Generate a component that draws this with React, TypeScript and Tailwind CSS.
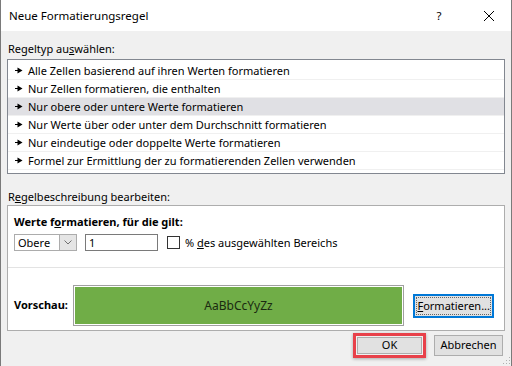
import React from 'react';

const ruleTypes = [
  'Alle Zellen basierend auf ihren Werten formatieren',
  'Nur Zellen formatieren, die enthalten',
  'Nur obere oder untere Werte formatieren',
  'Nur Werte über oder unter dem Durchschnitt formatieren',
  'Nur eindeutige oder doppelte Werte formatieren',
  'Formel zur Ermittlung der zu formatierenden Zellen verwenden',
];

function Arrow() {
  return (
    <svg width="8" height="7" viewBox="0 0 8 7" className="shrink-0">
      <path d="M0 3.5H3" stroke="#000" strokeWidth="1" />
      <path d="M2.5 0.5L7.5 3.5L2.5 6.5Z" fill="#000" />
    </svg>
  );
}

export default function App() {
  const selected = 2;

  return (
    <div
      className="w-[512px] h-[366px] flex flex-col bg-[#f0f0f0] border-x border-[#7a7a7a] text-[11px] text-black overflow-hidden"
      style={{ fontFamily: '"Segoe UI", "Noto Sans", sans-serif' }}
    >
      {/* Title bar */}
      <div className="h-[31px] shrink-0 bg-white flex items-center pl-[8px] text-[11.5px]">
        <span className="flex-1">Neue Formatierungsregel</span>
        <span className="w-[12px] text-center mr-[38px]">?</span>
        <svg width="12" height="12" viewBox="0 0 12 12" className="mr-[16px]">
          <path d="M1 1L11 11M11 1L1 11" stroke="#000" strokeWidth="1" />
        </svg>
      </div>

      <div className="flex flex-col px-[6px]">
        <div className="h-[16px] leading-[16px] mt-[10px] pl-[1px]">
          Regeltyp au<span className="underline">s</span>wählen:
        </div>

        {/* Rule type list */}
        <div className="mt-[2px] h-[115px] bg-white border border-[#828790] pt-[2px] flex flex-col">
          {ruleTypes.map((t, i) => (
            <div
              key={t}
              className={`h-[18px] flex items-center gap-[5px] pl-[7px] border-b border-[#f0f0f0] ${
                i === selected ? 'bg-[#e0e0e4]' : ''
              }`}
            >
              <Arrow />
              <span className="leading-[16px]">{t}</span>
            </div>
          ))}
        </div>

        <div className="h-[16px] leading-[16px] mt-[15px] pl-[1px]">
          R<span className="underline">e</span>gelbeschreibung bearbeiten:
        </div>

        {/* Rule description */}
        <div className="h-[126px] bg-white border border-[#adadad] flex flex-col">
          <div className="h-[62px] border-b border-[#e3e3e3] pl-[6px] pt-[8px] flex flex-col">
            <div className="h-[16px] leading-[16px] font-bold">
              Werte f<span className="underline">o</span>rmatieren, für die gilt:
            </div>
            <div className="mt-[4px] flex items-center h-[17px]">
              <div className="w-[63px] h-[17px] border border-[#acacac] flex">
                <span className="flex-1 pl-[3px] leading-[15px]">Obere</span>
                <div className="w-[17px] h-full bg-[#e5e5e5] border-l border-[#acacac] flex items-center justify-center">
                  <svg width="8" height="5" viewBox="0 0 8 5">
                    <path d="M0.5 0.5L4 4L7.5 0.5" stroke="#707070" fill="none" strokeWidth="1" />
                  </svg>
                </div>
              </div>
              <div className="ml-[8px] w-[73px] h-[17px] border border-[#7a7a7a] pl-[3px] leading-[15px]">1</div>
              <div className="ml-[9px] w-[13px] h-[13px] border border-[#333] bg-white" />
              <span className="ml-[5px] leading-[16px]">
                % <span className="underline">d</span>es ausgewählten Bereichs
              </span>
            </div>
          </div>
          <div className="flex-1 flex items-end pl-[6px] pr-[10px] pb-[4px]">
            <div className="h-[41px] w-full flex items-center">
              <span className="w-[59px] font-bold">Vorschau:</span>
              <div className="w-[334px] h-[41px] border border-[#a0a0a0] p-px">
                <div className="w-full h-full bg-[#70ad47] flex items-center justify-center text-[12px] text-[#1a2a10]">
                  AaBbCcYyZz
                </div>
              </div>
              <div className="ml-[9px] w-[81px] h-[24px] border-2 border-[#0078d7] bg-[#e1e1e1] p-px">
                <div className="w-full h-full border border-dotted border-[#666] flex items-center justify-center leading-[14px]">
                  <span><span className="underline">F</span>ormatieren...</span>
                </div>
              </div>
            </div>
          </div>
        </div>
      </div>

      {/* Footer buttons */}
      <div className="flex justify-end items-center pr-[8px] mt-[2px] relative">
        <div className="border-[3px] border-[#e8414a] w-[73px] h-[25px] p-[1px] shadow-[0_1px_3px_rgba(0,0,0,0.3)]">
          <div className="w-full h-full bg-[#e1e1e1] border border-[#adadad] flex items-center justify-center">
            OK
          </div>
        </div>
        <div className="ml-[8px] w-[69px] h-[21px] bg-[#e1e1e1] border border-[#adadad] flex items-center justify-center">
          Abbrechen
        </div>
        <svg width="8" height="8" viewBox="0 0 8 8" className="absolute right-[0px] top-[24px]">
          <rect x="6" y="0" width="1" height="1" fill="#b0b0b0" />
          <rect x="3" y="3" width="1" height="1" fill="#b0b0b0" />
          <rect x="6" y="3" width="1" height="1" fill="#b0b0b0" />
          <rect x="0" y="6" width="1" height="1" fill="#b0b0b0" />
          <rect x="3" y="6" width="1" height="1" fill="#b0b0b0" />
          <rect x="6" y="6" width="1" height="1" fill="#b0b0b0" />
        </svg>
      </div>
    </div>
  );
}
